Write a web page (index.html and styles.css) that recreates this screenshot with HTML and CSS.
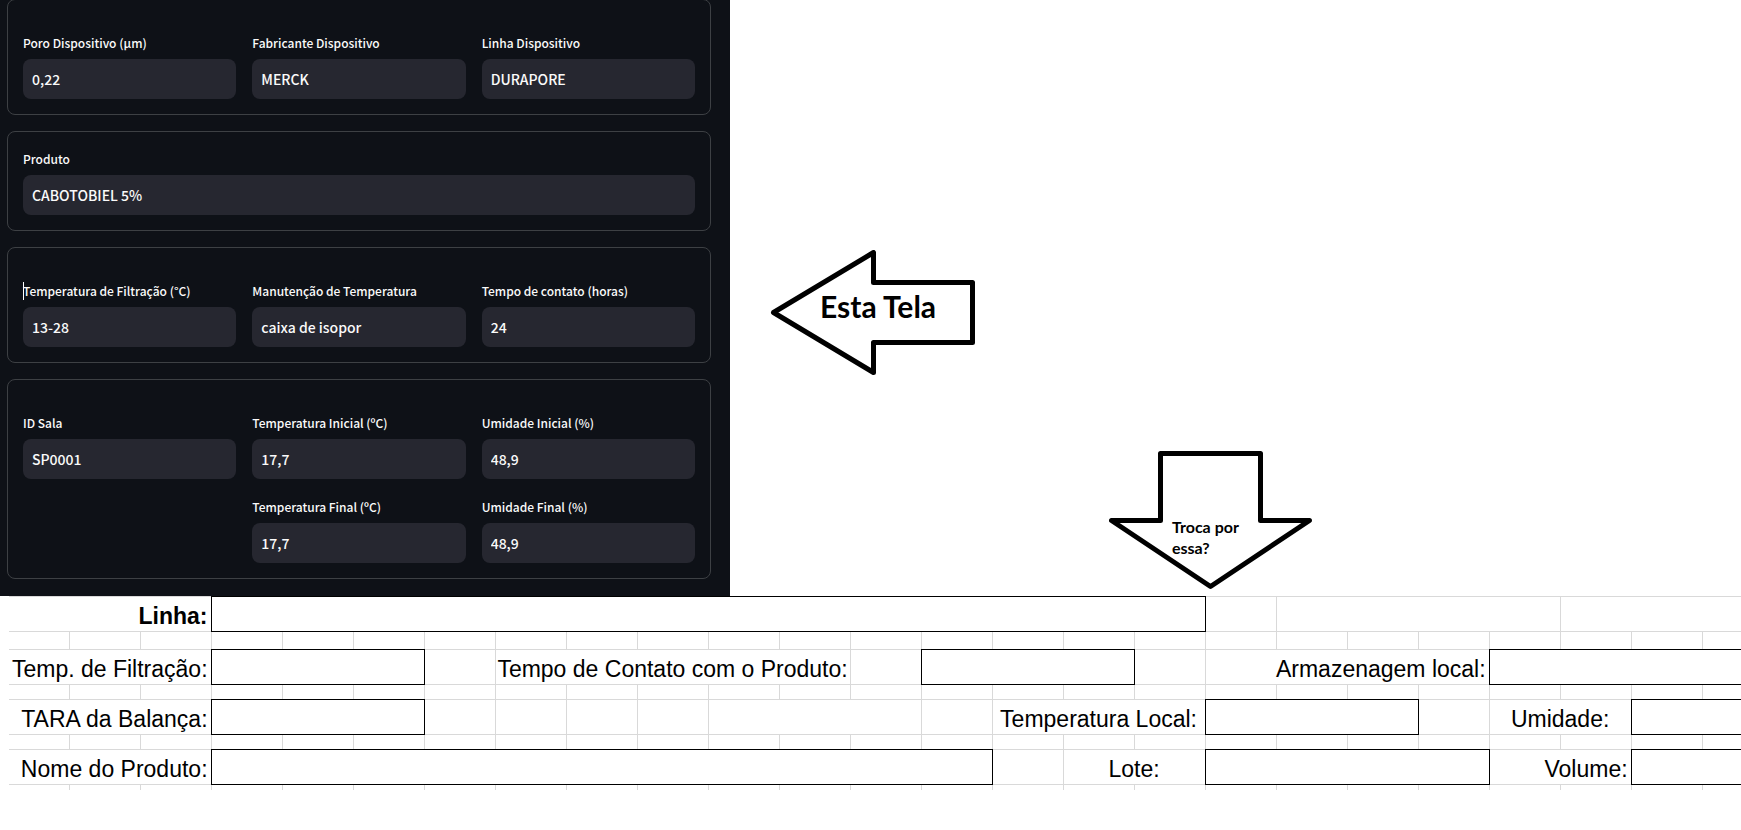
FILE: index.html
```
<!DOCTYPE html>
<html lang="pt-BR">
<head>
<meta charset="utf-8">
<title>Registro de Filtração</title>
<link rel="stylesheet" href="styles.css">
</head>
<body>
<main>
<div class="top">
  <form class="panel">
    <section class="card card-tall">
      <div class="field"><label for="poro">Poro Dispositivo (µm)</label><input id="poro" type="text" value="0,22"></div>
      <div class="field"><label for="fabricante">Fabricante Dispositivo</label><input id="fabricante" type="text" value="MERCK"></div>
      <div class="field"><label for="linha-disp">Linha Dispositivo</label><input id="linha-disp" type="text" value="DURAPORE"></div>
    </section>
    <section class="card">
      <div class="field field-wide"><label for="produto">Produto</label><input id="produto" type="text" value="CABOTOBIEL 5%"></div>
    </section>
    <section class="card card-tall">
      <div class="field"><label class="caret" for="temp-filt">Temperatura de Filtração (°C)</label><input id="temp-filt" type="text" value="13-28"></div>
      <div class="field"><label for="manutencao">Manutenção de Temperatura</label><input id="manutencao" type="text" value="caixa de isopor"></div>
      <div class="field"><label for="contato">Tempo de contato (horas)</label><input id="contato" type="text" value="24"></div>
    </section>
    <section class="card card-tall">
      <div class="field"><label for="sala">ID Sala</label><input id="sala" type="text" value="SP0001"></div>
      <div class="field"><label for="temp-ini">Temperatura Inicial (ºC)</label><input id="temp-ini" type="text" value="17,7"></div>
      <div class="field"><label for="umid-ini">Umidade Inicial (%)</label><input id="umid-ini" type="text" value="48,9"></div>
      <div class="field field-second"><label for="temp-fim">Temperatura Final (ºC)</label><input id="temp-fim" type="text" value="17,7"></div>
      <div class="field"><label for="umid-fim">Umidade Final (%)</label><input id="umid-fim" type="text" value="48,9"></div>
    </section>
  </form>
  <div class="canvas">
    <div class="note note-left">
      <svg width="206" height="126" viewBox="0 0 206 126" aria-hidden="true"><path d="M3.500 62.500 103.500 2.500V32.500H202.500V92.500H103.500V122.500Z"/></svg>
      <p>Esta Tela</p>
    </div>
    <div class="note note-down">
      <svg width="204" height="140" viewBox="0 0 204 140" aria-hidden="true"><path d="M2.500 70.500H51.500V3.500H151.500V70.500H200.500L101.500 136.500Z"/></svg>
      <p>Troca por<br>essa?</p>
    </div>
  </div>
</div>
<div class="sheet-wrap">
<table class="sheet">
  <colgroup><col class="c-first"><col span="23" class="c-unit"><col></colgroup>
  <tbody>
  <tr class="r-main">
    <th colspan="3" class="end bold"><label for="s-linha">Linha:</label></th>
    <td colspan="14" class="box"><input id="s-linha" type="text"></td>
    <td></td><td colspan="4"></td><td colspan="3"></td>
  </tr>
  <tr class="r-gap">
    <td></td><td></td><td></td><td></td><td></td><td></td><td></td><td></td><td></td><td></td><td></td><td></td><td></td><td></td><td></td><td></td><td></td><td></td><td></td><td></td><td></td><td></td><td></td><td></td><td></td>
  </tr>
  <tr class="r-main">
    <th colspan="3" class="end"><label for="s-temp">Temp. de Filtração:</label></th>
    <td colspan="3" class="box"><input id="s-temp" type="text"></td>
    <td></td>
    <th colspan="5"><label for="s-contato">Tempo de Contato com o Produto:</label></th>
    <td></td>
    <td colspan="3" class="box"><input id="s-contato" type="text"></td>
    <td></td>
    <th colspan="4" class="end"><label for="s-armaz">Armazenagem local:</label></th>
    <td colspan="4" class="box"><input id="s-armaz" type="text"></td>
  </tr>
  <tr class="r-thin">
    <td></td><td></td><td></td><td></td><td></td><td></td><td></td><td></td><td></td><td></td><td></td><td></td><td></td><td></td><td></td><td></td><td></td><td></td><td></td><td></td><td></td><td></td><td></td><td></td><td></td>
  </tr>
  <tr class="r-main">
    <th colspan="3" class="end"><label for="s-tara">TARA da Balança:</label></th>
    <td colspan="3" class="box"><input id="s-tara" type="text"></td>
    <td></td><td></td><td></td><td></td>
    <td colspan="3"></td>
    <td></td>
    <th colspan="3"><label for="s-local">Temperatura Local:</label></th>
    <td colspan="3" class="box"><input id="s-local" type="text"></td>
    <td></td>
    <th colspan="2"><label for="s-umid">Umidade:</label></th>
    <td colspan="2" class="box"><input id="s-umid" type="text"></td>
  </tr>
  <tr class="r-thin">
    <td></td><td></td><td></td><td></td><td></td><td></td><td></td><td></td><td></td><td></td><td></td><td></td><td></td><td></td><td></td><td></td><td></td><td></td><td></td><td></td><td></td><td></td><td></td><td></td><td></td>
  </tr>
  <tr class="r-main">
    <th colspan="3" class="end"><label for="s-nome">Nome do Produto:</label></th>
    <td colspan="11" class="box"><input id="s-nome" type="text"></td>
    <td></td>
    <th colspan="2"><label for="s-lote">Lote:</label></th>
    <td colspan="4" class="box"><input id="s-lote" type="text"></td>
    <th colspan="2" class="end"><label for="s-vol">Volume:</label></th>
    <td colspan="2" class="box"><input id="s-vol" type="text"></td>
  </tr>
  <tr class="r-last">
    <td></td><td></td><td></td><td></td><td></td><td></td><td></td><td></td><td></td><td></td><td></td><td></td><td></td><td></td><td></td><td></td><td></td><td></td><td></td><td></td><td></td><td></td><td></td><td></td><td></td>
  </tr>
  </tbody>
</table>
</div>
</main>
</body>
</html>
```
FILE: styles.css
```
* { box-sizing: border-box; }
body {
  margin: 0;
  background: #fff;
  color: #000;
  overflow-x: hidden;
}
.top {
  display: flex;
  overflow: hidden;
}

/* Dark form panel */
.panel {
  flex: none;
  width: 730px;
  padding: 0 19px 17px 7px;
  background: #0e1117;
  color: #fafafa;
  font-family: "Noto Sans CJK JP", "Noto Sans", sans-serif;
  font-weight: 500;
  display: flex;
  flex-direction: column;
  gap: 16px;
}
.card {
  display: grid;
  grid-template-columns: repeat(3, 1fr);
  gap: 16px;
  padding: 15px;
  border: 1px solid #3d4044;
  border-radius: 8px;
}
.card-tall { padding-top: 31px; }
/* the first card is scrolled one pixel past the top edge */
.card:first-child { margin-top: -1px; }
.field {
  display: flex;
  flex-direction: column;
  gap: 4px;
  min-width: 0;
}
.field-wide { grid-column: 1 / -1; }
.field-second { grid-column: 2; }
.field label {
  position: relative;
  font-size: 12px;
  line-height: 24px;
  white-space: nowrap;
}
.caret::before {
  content: "";
  position: absolute;
  left: 0;
  top: 3px;
  width: 1px;
  height: 18px;
  background: #fff;
}
.field input {
  width: 100%;
  height: 40px;
  padding: 0 9px;
  border: 0;
  border-radius: 8px;
  background: #262730;
  color: #fafafa;
  font-family: inherit;
  font-size: 14px;
  font-weight: inherit;
}

/* Arrow annotations */
.canvas {
  position: relative;
  flex: 1;
  min-width: 0;
}
.note {
  position: absolute;
  font-family: Lato, sans-serif;
  font-weight: 700;
}
.note svg {
  display: block;
  fill: none;
  stroke: #000;
  stroke-width: 5;
  stroke-linejoin: round;
}
.note p {
  position: absolute;
  margin: 0;
  white-space: nowrap;
}
.note-left { left: 40px; top: 250px; }
.note-left p { left: 50px; top: 38px; font-size: 30px; line-height: 36px; }
.note-down { left: 379px; top: 450px; }
.note-down p { left: 63px; top: 66px; font-size: 16px; line-height: 21px; }

/* Spreadsheet */
.sheet-wrap { padding-left: 9px; }
.sheet {
  width: 100%;
  table-layout: fixed;
  border-collapse: collapse;
  font-family: "Liberation Sans", Arial, sans-serif;
  font-size: 23px;
  line-height: 28px;
}
.c-first { width: 60px; }
.c-unit { width: 71px; }
.r-main { height: 35px; }
.r-gap { height: 18px; }
.r-thin { height: 15px; }
.r-last { height: 5px; }
.sheet td, .sheet th {
  padding: 0;
  border: 1px solid #d9d9d9;
  font-weight: 400;
  white-space: nowrap;
}
.sheet th { padding-top: 4px; text-align: center; }
.sheet th.end { padding-right: 3px; text-align: right; }
.sheet th.bold { font-weight: 700; }
.sheet tr > :first-child { border-left: 0; }
.sheet tr > :last-child { border-right: 0; }
.sheet .r-last td { border-bottom: 0; }
/* double outranks solid where collapsed borders meet */
.sheet td.box { border-color: #000; border-style: double; }
.sheet input {
  display: block;
  width: 100%;
  height: 32px;
  padding: 0 4px;
  border: 0;
  background: transparent;
  font: inherit;
}
```
